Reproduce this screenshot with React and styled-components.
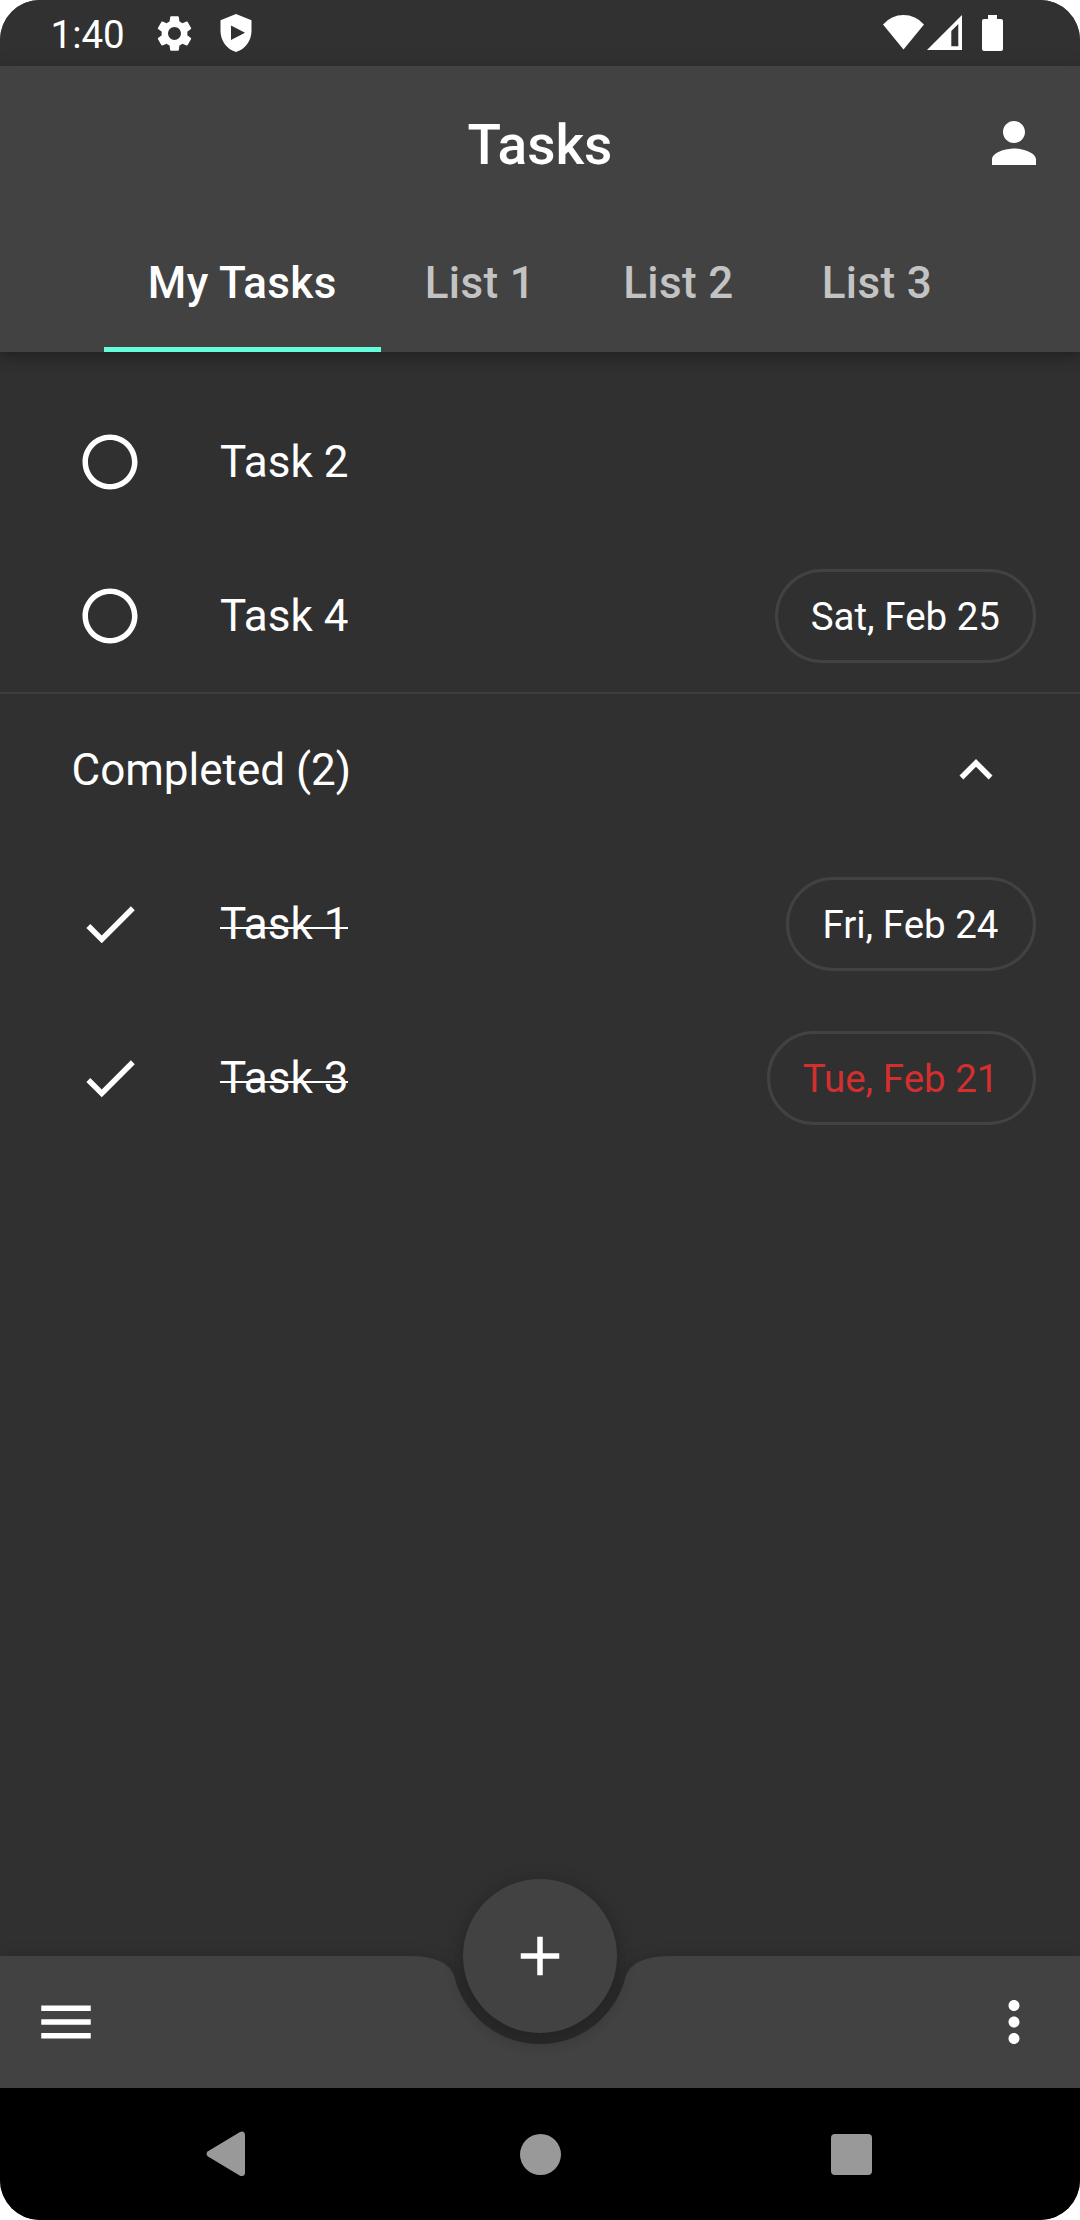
import React from "react";
import styled, { createGlobalStyle } from "styled-components";

const GlobalStyle = createGlobalStyle`
  html, body {
    margin: 0;
    padding: 0;
    background: #ffffff;
  }
  *, *::before, *::after {
    box-sizing: border-box;
  }
`;

const Screen = styled.div`
  display: flex;
  flex-direction: column;
  width: 1080px;
  height: 2220px;
  overflow: hidden;
  border-radius: 40px;
  background: #303030;
  color: #ffffff;
  font-family: Roboto, "Liberation Sans", sans-serif;
  font-size: 44px;
`;

const Icon = styled.svg`
  display: block;
  flex: none;
  width: ${(p) => p.$w || 66}px;
  height: ${(p) => p.$h || p.$w || 66}px;
  fill: ${(p) => p.$color || "#ffffff"};
`;

const StatusBar = styled.div`
  display: flex;
  flex: none;
  align-items: center;
  height: 66px;
  padding: 0 77px 0 50.5px;
  background: #313131;
`;

const Clock = styled.span`
  width: 102.5px;
  padding-top: 3px;
  font-size: 38.5px;
  line-height: 63px;
`;

const StatusNotifications = styled.div`
  display: flex;
  align-items: center;
  gap: 23.5px;
  flex: 1;
`;

const StatusSystem = styled.div`
  display: flex;
  align-items: center;
`;

const Header = styled.header`
  display: flex;
  flex: none;
  flex-direction: column;
  height: 286px;
  background: #424242;
  box-shadow: 0 6px 11px rgba(0, 0, 0, 0.22), 0 2px 20px rgba(0, 0, 0, 0.12);
`;

const TitleBar = styled.div`
  display: grid;
  grid-template-columns: 1fr auto 1fr;
  align-items: center;
  height: 154px;
  padding: 0 33px;
`;

const Title = styled.h1`
  grid-column: 2;
  margin: 0;
  padding-top: 3px;
  font-size: 55px;
  font-weight: 500;
  line-height: 64px;
`;

const TitleAction = styled.div`
  display: flex;
  justify-content: flex-end;
`;

const Tabs = styled.nav`
  display: flex;
  justify-content: center;
  height: 132px;
`;

const Tab = styled.div`
  display: flex;
  align-items: center;
  padding: 0 44px 2px;
  border-bottom: 5.5px solid ${(p) => (p.$active ? "#64ffda" : "transparent")};
  color: ${(p) => (p.$active ? "#ffffff" : "rgba(255, 255, 255, 0.7)")};
  font-weight: 500;
  line-height: 52px;
  letter-spacing: 0.38px;
`;

const List = styled.main`
  display: flex;
  flex: 1;
  flex-direction: column;
  padding-top: 33px;
`;

const TaskRow = styled.div`
  display: flex;
  align-items: center;
  height: 154px;
  padding: 0 44px 0 77px;
`;

const TaskName = styled.span`
  flex: 1;
  margin-left: 77px;
`;

const Label = styled.span`
  position: relative;

  &::after {
    content: "";
    display: ${(p) => (p.$done ? "block" : "none")};
    position: absolute;
    left: 0;
    right: 0;
    top: 29px;
    height: 2px;
    background: #ffffff;
  }
`;

const Chip = styled.span`
  display: flex;
  align-items: center;
  height: 94px;
  padding: 0 ${(p) => (p.$done ? 34.5 : 33)}px 0 33px;
  border: 3px solid #424242;
  border-radius: 47px;
  color: ${(p) => (p.$late ? "#d32f2f" : "#ffffff")};
  font-size: 38.5px;
`;

const Divider = styled.div`
  height: 2px;
  margin: -1px 0;
  background: #3e3e3e;
`;

const SectionRow = styled.div`
  display: flex;
  align-items: center;
  justify-content: space-between;
  height: 154px;
  padding: 0 71.5px;
`;

const BottomArea = styled.div`
  position: relative;
  flex: none;
  height: 132px;
`;

const BarShadow = styled.div`
  filter: drop-shadow(0 5px 9px rgba(0, 0, 0, 0.28));
`;

const BottomBar = styled.footer`
  display: flex;
  align-items: center;
  justify-content: space-between;
  height: 132px;
  padding: 0 33px;
  background: #424242;
  clip-path: path("M0 0H408Q449.25 0 454.67 21.5A88 88 0 0 0 625.33 21.5Q630.75 0 672 0H1080V132H0Z");
`;

const AddButton = styled.div`
  position: absolute;
  left: 463px;
  top: -77px;
  display: flex;
  align-items: center;
  justify-content: center;
  width: 154px;
  height: 154px;
  border-radius: 50%;
  background: #424242;
  box-shadow: 0 8px 16px rgba(0, 0, 0, 0.2), 0 2px 22px rgba(0, 0, 0, 0.12);
`;

const SystemNav = styled.div`
  position: relative;
  display: flex;
  flex: none;
  align-items: center;
  justify-content: space-between;
  height: 132px;
  padding: 0 208px 0 206px;
  background: #000000;
`;

const HomeDot = styled.div`
  width: 41px;
  height: 41px;
  margin-left: 4px;
  border-radius: 50%;
  background: #999999;
`;

const RecentsSquare = styled.div`
  width: 41px;
  height: 41px;
  margin-top: 1px;
  border-radius: 4px;
  background: #999999;
`;

const OPEN_TASKS = [
  { name: "Task 2" },
  { name: "Task 4", date: "Sat, Feb 25" },
];

const DONE_TASKS = [
  { name: "Task 1", date: "Fri, Feb 24" },
  { name: "Task 3", date: "Tue, Feb 21", late: true },
];

const TABS = ["My Tasks", "List 1", "List 2", "List 3"];

function Task({ name, date, late, done }) {
  return (
    <TaskRow>
      <Icon viewBox="0 0 24 24">
        {done ? (
          <path d="M9 16.17L4.83 12l-1.42 1.41L9 19 21 7l-1.41-1.41z" />
        ) : (
          <path d="M12 2C6.48 2 2 6.48 2 12s4.48 10 10 10 10-4.48 10-10S17.52 2 12 2zm0 18c-4.42 0-8-3.58-8-8s3.58-8 8-8 8 3.58 8 8-3.58 8-8 8z" />
        )}
      </Icon>
      <TaskName>
        <Label $done={done}>{name}</Label>
      </TaskName>
      {date && (
        <Chip $late={late} $done={done}>
          {date}
        </Chip>
      )}
    </TaskRow>
  );
}

export default function App() {
  return (
    <>
      <GlobalStyle />
      <Screen>
        <StatusBar>
          <Clock>1:40</Clock>
          <StatusNotifications>
            <Icon $w={43} viewBox="0 0 24 24">
              <path d="M19.14 12.94c.04-.3.06-.61.06-.94 0-.32-.02-.64-.07-.94l2.03-1.58c.18-.14.23-.41.12-.61l-1.92-3.32c-.12-.22-.37-.29-.59-.22l-2.39.96c-.5-.38-1.03-.7-1.62-.94l-.36-2.54c-.04-.24-.24-.41-.48-.41h-3.84c-.24 0-.43.17-.47.41l-.36 2.54c-.59.24-1.13.57-1.62.94l-2.39-.96c-.22-.08-.47 0-.59.22L2.74 8.87c-.12.21-.08.47.12.61l2.03 1.58c-.05.3-.09.63-.09.94s.02.64.07.94l-2.03 1.58c-.18.14-.23.41-.12.61l1.92 3.32c.12.22.37.29.59.22l2.39-.96c.5.38 1.03.7 1.62.94l.36 2.54c.05.24.24.41.48.41h3.84c.24 0 .44-.17.47-.41l.36-2.54c.59-.24 1.13-.56 1.62-.94l2.39.96c.22.08.47 0 .59-.22l1.92-3.32c.12-.22.07-.47-.12-.61l-2.01-1.58zM12 15.6c-1.98 0-3.6-1.62-3.6-3.6s1.62-3.6 3.6-3.6 3.6 1.62 3.6 3.6-1.62 3.6-3.6 3.6z" />
            </Icon>
            <Icon $w={32} $h={38} viewBox="0 0 32 38">
              <path
                fillRule="evenodd"
                d="M16 0L31.5 6.3V17C31.5 27.5 24.5 35.5 16 38C7.5 35.5 .5 27.5 .5 17V6.3ZM11 11.5V26L25 18.8Z"
              />
            </Icon>
          </StatusNotifications>
          <StatusSystem>
            <Icon $w={121} $h={36} viewBox="882 15 121 36">
              <path d="M883 24.5A27 27 0 0 1 924 24.5L903.5 49.5Z" />
              <path
                fillRule="evenodd"
                d="M927 50L962 15V50ZM951.3 31V46.3H958.3V24Z"
              />
              <path d="M988 15h9v4h4a2 2 0 0 1 2 2v28a2 2 0 0 1-2 2h-17a2 2 0 0 1-2-2V21a2 2 0 0 1 2-2h4z" />
            </Icon>
          </StatusSystem>
        </StatusBar>

        <Header>
          <TitleBar>
            <Title>Tasks</Title>
            <TitleAction>
              <Icon viewBox="0 0 24 24">
                <path d="M12 12c2.21 0 4-1.79 4-4s-1.79-4-4-4-4 1.79-4 4 1.79 4 4 4zm0 2c-2.67 0-8 1.34-8 4v2h16v-2c0-2.66-5.33-4-8-4z" />
              </Icon>
            </TitleAction>
          </TitleBar>
          <Tabs>
            {TABS.map((tab, i) => (
              <Tab key={tab} $active={i === 0}>
                {tab}
              </Tab>
            ))}
          </Tabs>
        </Header>

        <List>
          {OPEN_TASKS.map((task) => (
            <Task key={task.name} {...task} />
          ))}
          <Divider />
          <SectionRow>
            <span>Completed (2)</span>
            <Icon viewBox="0 0 24 24">
              <path d="M12 8l-6 6 1.41 1.41L12 10.83l4.59 4.58L18 14z" />
            </Icon>
          </SectionRow>
          {DONE_TASKS.map((task) => (
            <Task key={task.name} {...task} done />
          ))}
        </List>

        <BottomArea>
          <BarShadow>
            <BottomBar>
              <Icon viewBox="0 0 24 24">
                <path d="M3 18h18v-2H3v2zm0-5h18v-2H3v2zm0-7v2h18V6H3z" />
              </Icon>
              <Icon viewBox="0 0 24 24">
                <path d="M12 8c1.1 0 2-.9 2-2s-.9-2-2-2-2 .9-2 2 .9 2 2 2zm0 2c-1.1 0-2 .9-2 2s.9 2 2 2 2-.9 2-2-.9-2-2-2zm0 6c-1.1 0-2 .9-2 2s.9 2 2 2 2-.9 2-2-.9-2-2-2z" />
              </Icon>
            </BottomBar>
          </BarShadow>
          <AddButton>
            <Icon viewBox="0 0 24 24">
              <path d="M19 13h-6v6h-2v-6H5v-2h6V5h2v6h6v2z" />
            </Icon>
          </AddButton>
        </BottomArea>

        <SystemNav>
          <Icon $w={39} $h={46} $color="#999999" viewBox="0 0 39 46">
            <path d="M2 20.3L34 .9Q39 -.5 39 4.5V41.5Q39 46 34 44.8L2 25.4Q-1 22.9 2 20.3Z" />
          </Icon>
          <HomeDot />
          <RecentsSquare />
        </SystemNav>
      </Screen>
    </>
  );
}
